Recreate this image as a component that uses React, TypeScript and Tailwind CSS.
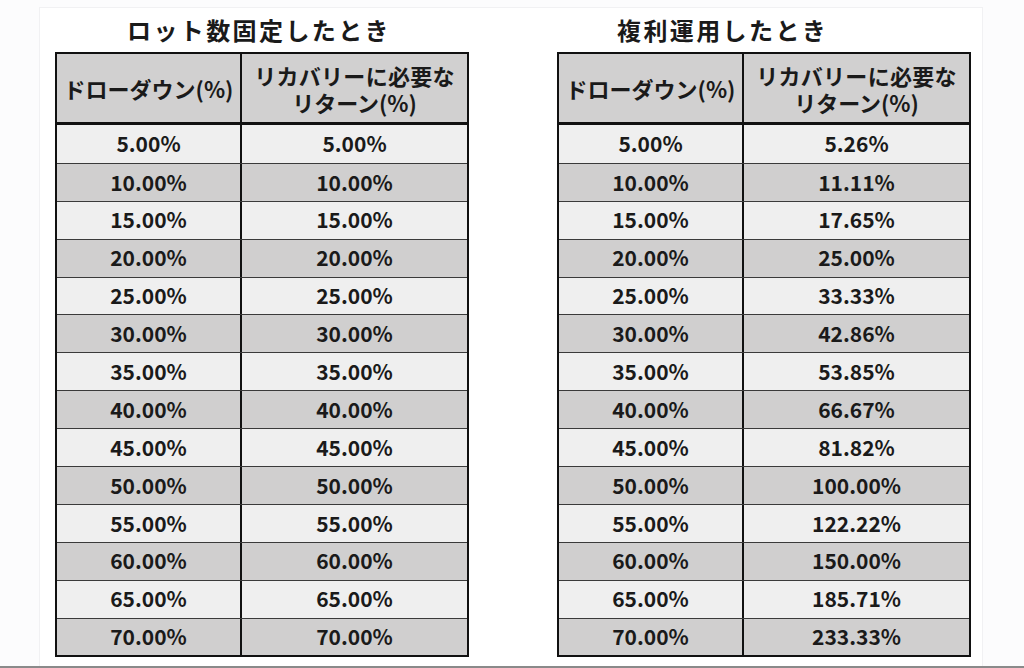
import React from "react"

const drawdowns = [
    "5.00%", "10.00%", "15.00%", "20.00%", "25.00%", "30.00%", "35.00%",
    "40.00%", "45.00%", "50.00%", "55.00%", "60.00%", "65.00%", "70.00%",
]

const fixedLot = drawdowns

const compound = [
    "5.26%", "11.11%", "17.65%", "25.00%", "33.33%", "42.86%", "53.85%",
    "66.67%", "81.82%", "100.00%", "122.22%", "150.00%", "185.71%", "233.33%",
]

const font = { fontFamily: '"Noto Sans CJK JP", "Noto Sans", sans-serif' }

function RecoveryTable({ title, returns, titlePad }: { title: string; returns: string[]; titlePad: string }) {
    return (
        <div className="flex flex-col w-[414px]">
            <div className={`h-[44px] flex items-center ${titlePad}`}>
                <p className="text-[24px] font-bold tracking-[2.4px] text-[#1a1a1a] leading-none">{title}</p>
            </div>
            <div className="border-2 border-[#111] text-[#1a1a1a]">
                <div className="grid grid-cols-[185px_1fr] h-[71px] bg-[#d1d0d0] border-b-[3px] border-[#111]">
                    <div className="flex items-center justify-center border-r-2 border-[#111] text-[22px] font-bold">
                        ドローダウン(%)
                    </div>
                    <div className="flex flex-col items-center justify-center text-[22px] font-bold leading-[27px] pt-[1px]">
                        <span className="tracking-[0.3px]">リカバリーに必要な</span>
                        <span>リターン(%)</span>
                    </div>
                </div>
                {drawdowns.map((d, i) => (
                    <div
                        key={d}
                        className={
                            (i % 2 === 0 ? "bg-[#efefef]" : "bg-[#d0cfcf]") +
                            (i > 0 ? " border-t border-[#3a3a3a]" : "") +
                            " grid grid-cols-[185px_1fr] h-[37.9px]"
                        }
                    >
                        <div className="flex items-center justify-center border-r-2 border-[#111] text-[21px] font-bold">
                            {d}
                        </div>
                        <div className="flex items-center justify-center text-[21px] font-bold">
                            {returns[i]}
                        </div>
                    </div>
                ))}
            </div>
        </div>
    )
}

export default function App() {
    return (
        <div className="w-[1024px] h-[668px] bg-[#fcfcfd] flex flex-col overflow-hidden" style={font}>
            <div className="flex-1 pt-[7px] pl-[39px]">
                <div className="w-[944px] h-full bg-white border border-[#f1f1f3] border-b-0 flex gap-[88px] pl-[15px]">
                    <RecoveryTable title="ロット数固定したとき" returns={fixedLot} titlePad="pl-[72px]" />
                    <RecoveryTable title="複利運用したとき" returns={compound} titlePad="pl-[60px]" />
                </div>
            </div>
            <div className="h-[2px] bg-[#8a8a8a]" />
        </div>
    )
}
